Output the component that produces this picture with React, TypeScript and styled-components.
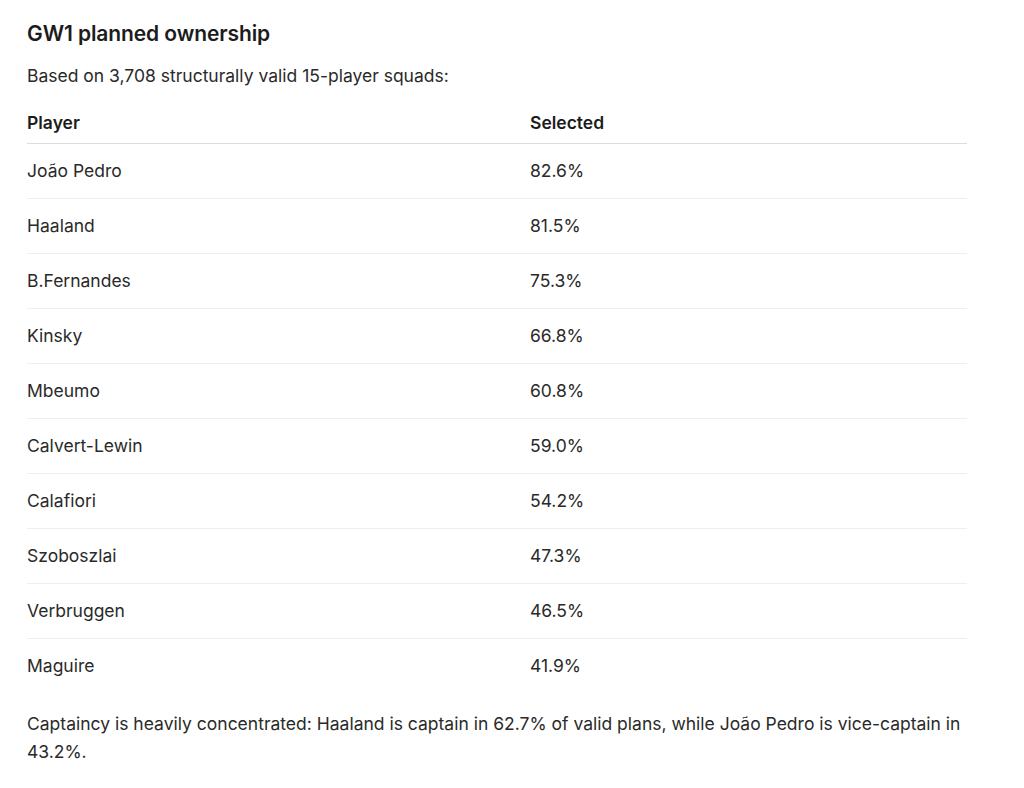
import styled, { createGlobalStyle } from "styled-components";

const GlobalStyle = createGlobalStyle`
  html, body {
    margin: 0;
    padding: 0;
    background: #ffffff;
  }
  body {
    font-family: Inter, "Liberation Sans", sans-serif;
    color: #222222;
  }
`;

interface Row {
  player: string;
  selected: string;
}

const ROWS: Row[] = [
  { player: "João Pedro", selected: "82.6%" },
  { player: "Haaland", selected: "81.5%" },
  { player: "B.Fernandes", selected: "75.3%" },
  { player: "Kinsky", selected: "66.8%" },
  { player: "Mbeumo", selected: "60.8%" },
  { player: "Calvert-Lewin", selected: "59.0%" },
  { player: "Calafiori", selected: "54.2%" },
  { player: "Szoboszlai", selected: "47.3%" },
  { player: "Verbruggen", selected: "46.5%" },
  { player: "Maguire", selected: "41.9%" },
];

const App: React.FC = () => {
  return (
    <>
      <GlobalStyle />
      <Page>
        <Title>GW1 planned ownership</Title>
        <Intro>Based on 3,708 structurally valid 15-player squads:</Intro>
        <Table>
          <thead>
            <tr>
              <HeadCell $first>Player</HeadCell>
              <HeadCell>Selected</HeadCell>
            </tr>
          </thead>
          <tbody>
            {ROWS.map((row, index) => (
              <BodyRow key={row.player} $last={index === ROWS.length - 1}>
                <Cell>{row.player}</Cell>
                <Cell>{row.selected}</Cell>
              </BodyRow>
            ))}
          </tbody>
        </Table>
        <Note>
          Captaincy is heavily concentrated: Haaland is captain in 62.7% of valid plans, while João Pedro is vice-captain in
          43.2%.
        </Note>
      </Page>
    </>
  );
};
export default App;

const Page = styled.div`
  display: flex;
  flex-direction: column;
  padding: 20px 40px 0 27px;
`;

const Title = styled.h2`
  margin: 0;
  font-size: 21px;
  font-weight: 600;
  line-height: 28px;
  letter-spacing: -0.1px;
  color: #1c1c1c;
`;

const Intro = styled.p`
  margin: 15px 0 0;
  font-size: 17.5px;
  line-height: 26px;
  color: #2a2a2a;
`;

const Table = styled.table`
  margin-top: 22px;
  width: 940px;
  border-collapse: collapse;
  font-size: 17.5px;
`;

const HeadCell = styled.th<{ $first?: boolean }>`
  text-align: left;
  font-weight: 600;
  padding: 0 0 8px;
  height: 24px;
  line-height: 24px;
  width: ${(p) => (p.$first ? "503px" : "auto")};
  border-bottom: 1px solid #dcdcdc;
  color: #1c1c1c;
`;

const BodyRow = styled.tr<{ $last?: boolean }>`
  border-bottom: ${(p) => (p.$last ? "none" : "1px solid #efefef")};
`;

const Cell = styled.td`
  height: 54px;
  padding: 0;
  vertical-align: middle;
  line-height: 24px;
  color: #2a2a2a;
`;

const Note = styled.p`
  margin: 17px 0 0;
  max-width: 950px;
  font-size: 17.5px;
  line-height: 28px;
  color: #2a2a2a;
`;
